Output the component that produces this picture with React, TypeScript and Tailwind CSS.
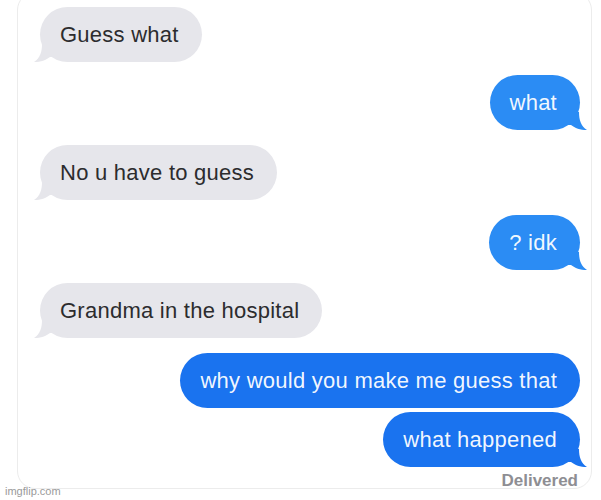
const font = { fontFamily: '"Liberation Sans", Arial, sans-serif' };

type Msg = { text: string; me: boolean; mt: string; tail: boolean; dark?: boolean };

const messages: Msg[] = [
  { text: "Guess what", me: false, mt: "mt-[14px]", tail: true },
  { text: "what", me: true, mt: "mt-[13px]", tail: true },
  { text: "No u have to guess", me: false, mt: "mt-[15px]", tail: true },
  { text: "? idk", me: true, mt: "mt-[15px]", tail: true },
  { text: "Grandma in the hospital", me: false, mt: "mt-[13px]", tail: true },
  { text: "why would you make me guess that", me: true, mt: "mt-[15px]", tail: false, dark: true },
  { text: "what happened", me: true, mt: "mt-[4px]", tail: true, dark: true },
];

function Tail({ me, color }: { me: boolean; color: string }) {
  // little curled tail at the bottom corner of the bubble
  return (
    <svg
      width="20"
      height="18"
      viewBox="0 0 20 18"
      className={`absolute bottom-0 ${me ? "-right-[7px] -scale-x-100" : "-left-[6px]"}`}
      aria-hidden="true"
    >
      <path d="M8 0 C8 8 6 14 0 18 C7 18 12 16 16 13 L20 13 L20 0 Z" fill={color} />
    </svg>
  );
}

function Bubble({ msg }: { msg: Msg }) {
  const color = msg.me ? (msg.dark ? "#1a73ef" : "#2b8cf4") : "#e6e6eb";
  return (
    <div className={`flex ${msg.me ? "justify-end" : "justify-start"} ${msg.mt}`}>
      <div
        className={`relative h-[55px] flex items-center pl-[20px] pr-[23px] rounded-[28px] text-[22px] tracking-[0.25px] ${
          msg.me ? "text-white/95" : "text-[#2c2c2e]"
        }`}
        style={{ backgroundColor: color }}
      >
        {msg.tail && <Tail me={msg.me} color={color} />}
        <span className="relative">{msg.text}</span>
      </div>
    </div>
  );
}

export default function App() {
  return (
    <div className="relative w-[601px] h-[500px] bg-white overflow-hidden" style={font}>
      {/* faint screen frame */}
      <div className="ml-[17px] -mt-[8px] w-[575px] h-[497px] border border-[#ececec] rounded-[18px] pl-[22px] pr-[11px]">
        {messages.map((m) => (
          <Bubble key={m.text} msg={m} />
        ))}
        <div className="flex justify-end mt-[4px] pr-[2px]">
          <span className="text-[17px] leading-[20px] font-bold text-[#8e8e93]">Delivered</span>
        </div>
      </div>
      <span className="absolute left-[5px] bottom-[3px] text-[11px] leading-[12px] text-[#9a9a9a]">imgflip.com</span>
    </div>
  );
}
